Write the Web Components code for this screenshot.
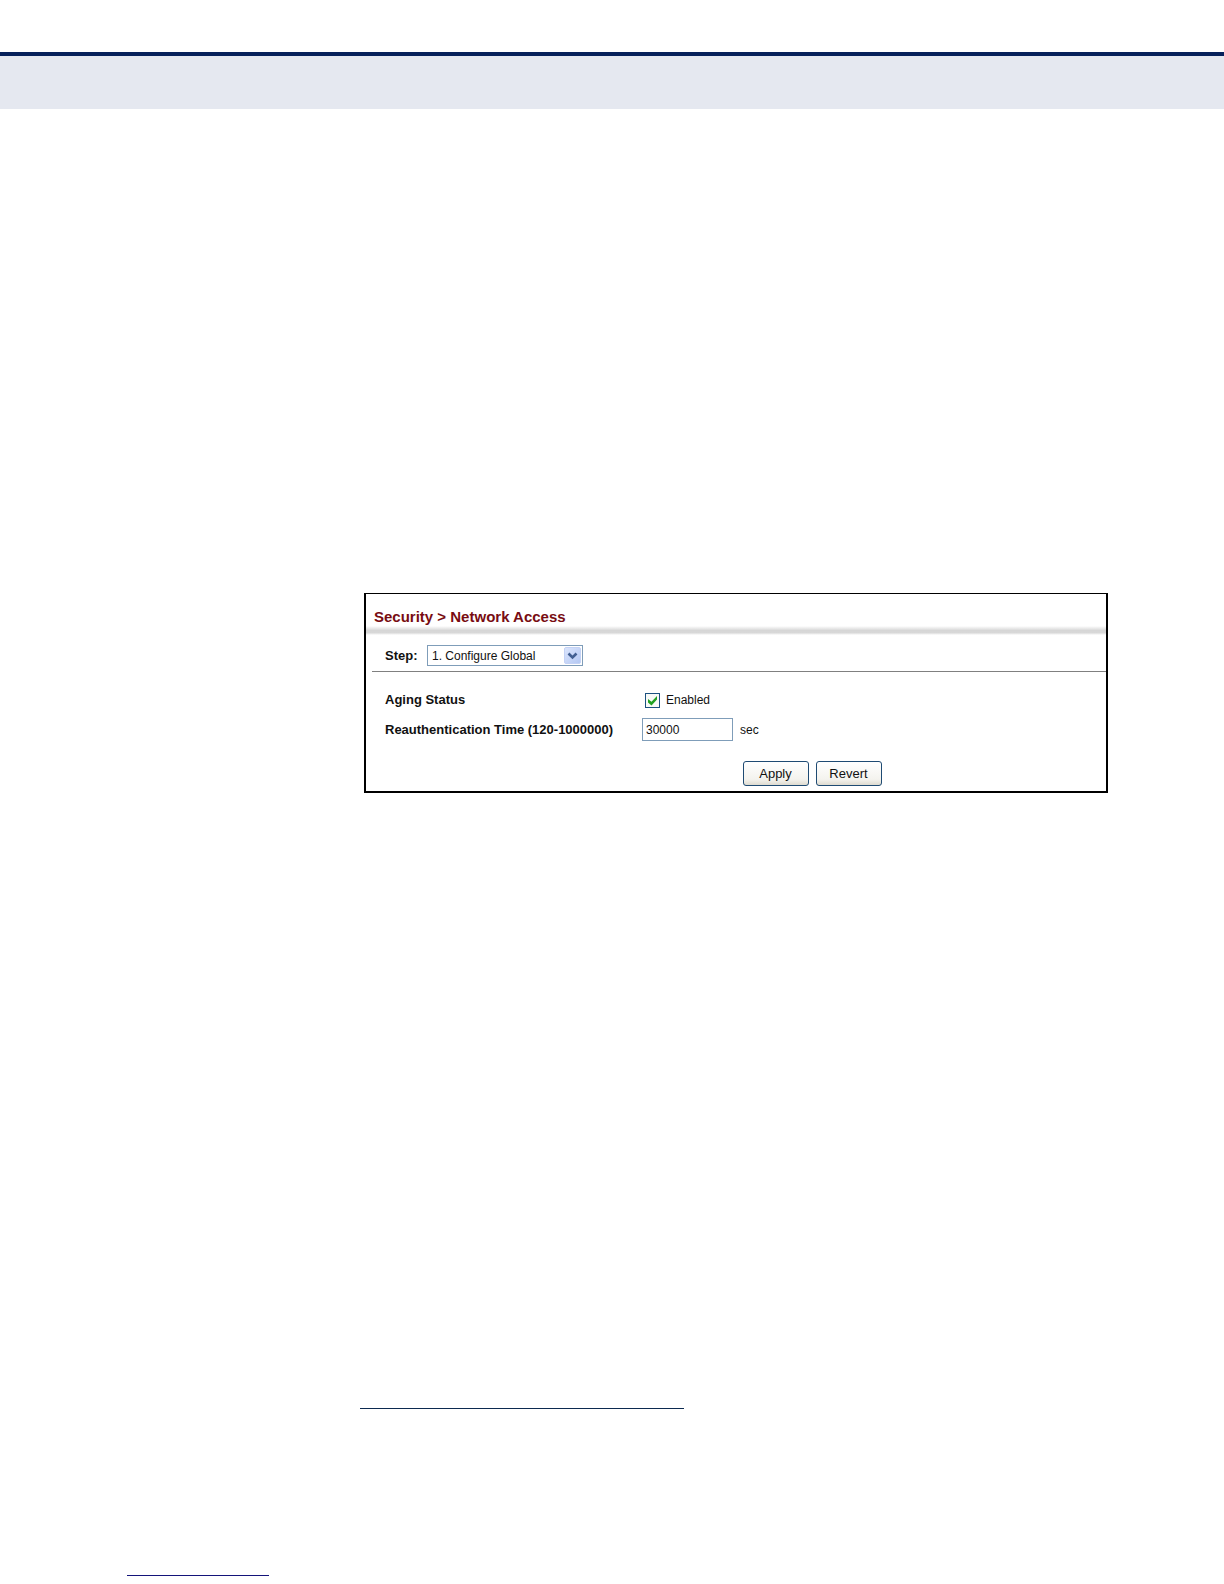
<!DOCTYPE html>
<html lang="en">
<head>
<meta charset="utf-8">
<meta name="viewport" content="width=device-width, initial-scale=1">
<title>Security &gt; Network Access</title>
<style>
  body {
    margin: 0;
    background: #fff;
    color: #111;
    font: 12px/16px "Liberation Sans", Arial, sans-serif;
  }
</style>
</head>
<body>
<manual-page>
  <page-banner slot="banner"></page-banner>
  <settings-panel heading="Security > Network Access">
    <step-select slot="toolbar" label="Step:">1. Configure Global</step-select>
    <check-setting label="Aging Status" text="Enabled"></check-setting>
    <text-setting label="Reauthentication Time (120-1000000)" value="30000" unit="sec"></text-setting>
    <push-button slot="actions">Apply</push-button>
    <push-button slot="actions">Revert</push-button>
  </settings-panel>
  <page-rule slot="note"></page-rule>
  <page-rule slot="footer"></page-rule>
</manual-page>

<script>
/**
 * Base class: renders styles and markup into an open shadow root.
 */
class BaseElement extends HTMLElement {
  constructor() {
    super();
    this.attachShadow({ mode: "open" });
  }

  /**
   * @returns {void}
   */
  connectedCallback() {
    const template = document.createElement("template");
    template.innerHTML = `<style>* { box-sizing: border-box; } ${this.styles}</style>${this.render()}`;
    this.shadowRoot.replaceChildren(template.content.cloneNode(true));
  }

  /**
   * @param {string} name
   * @returns {string}
   */
  attr(name) {
    return (this.getAttribute(name) || "")
      .replace(/&/g, "&amp;")
      .replace(/</g, "&lt;")
      .replace(/>/g, "&gt;")
      .replace(/"/g, "&quot;");
  }

  get styles() {
    return "";
  }

  render() {
    return "";
  }
}

class ManualPage extends BaseElement {
  get styles() {
    return `
      :host { display: flex; flex-direction: column; min-height: 100vh; box-sizing: border-box; padding-top: 52px; }
      main { margin: 484px 116px 0 364px; }
      .note { width: 324px; margin: 615px 0 0 360px; }
      footer { width: 142px; margin: 166px 0 8px 127px; }
      .note { --rule-color: #0c2a50; }
      footer { --rule-color: #14147a; }
    `;
  }

  render() {
    return `
      <slot name="banner"></slot>
      <main><slot></slot></main>
      <div class="note"><slot name="note"></slot></div>
      <footer><slot name="footer"></slot></footer>
    `;
  }
}

class PageBanner extends BaseElement {
  get styles() {
    return `
      :host { display: block; height: 57px; box-sizing: border-box; border-top: 4px solid #06215b; background: #e5e8f0; }
    `;
  }
}

class PageRule extends BaseElement {
  get styles() {
    return `
      :host { display: block; height: 1px; background: var(--rule-color); }
    `;
  }
}

class SettingsPanel extends BaseElement {
  get styles() {
    return `
      :host { display: block; box-sizing: border-box; border: 2px solid #000; border-top-width: 1px; }
      h1 { margin: 0; padding: 13px 8px 0; height: 32px; font-size: 15px; line-height: 20px; color: #780c12; }
      .shade { height: 9px; background: linear-gradient(#fff, #d6d6d6 50%, #d8d8d8 75%, #fff); }
      .toolbar { margin-left: 6px; padding: 10px 13px 5px; border-bottom: 1px solid #808080; }
      .rows { padding: 18px 19px 0; }
      .actions { display: flex; justify-content: center; gap: 7px; margin-top: 20px; padding: 0 0 5px 152px; }
    `;
  }

  render() {
    return `
      <h1>${this.attr("heading")}</h1>
      <div class="shade"></div>
      <div class="toolbar"><slot name="toolbar"></slot></div>
      <div class="rows"><slot></slot></div>
      <div class="actions"><slot name="actions"></slot></div>
    `;
  }
}

class StepSelect extends BaseElement {
  get styles() {
    return `
      :host { display: flex; align-items: center; }
      label { width: 42px; font-size: 13px; font-weight: bold; }
      .box { display: grid; width: 156px; }
      .box > * { grid-area: 1 / 1; }
      select { appearance: none; width: 100%; height: 21px; margin: 0; padding: 0 20px 0 4px; border: 1px solid #7f9db9; border-radius: 0; background: #fff; color: #111; font: inherit; }
      svg { justify-self: end; align-self: center; margin-right: 2px; pointer-events: none; }
    `;
  }

  render() {
    return `
      <label for="step">${this.attr("label")}</label>
      <span class="box">
        <select id="step"><option>${this.textContent}</option></select>
        <svg width="17" height="17" viewBox="0 0 17 17" aria-hidden="true">
          <defs><linearGradient id="face" x2="1" y2="1"><stop stop-color="#dce6fd"/><stop offset="1" stop-color="#b3c7f3"/></linearGradient></defs>
          <rect x=".5" y=".5" width="16" height="16" rx="1.5" fill="url(#face)" stroke="#c4d2f5"/>
          <path d="M4.500 6.500l4 4 4-4" fill="none" stroke="#425f92" stroke-width="2.600"/>
        </svg>
      </span>
    `;
  }
}

/** Shared layout for the label and control columns. */
const rowStyles = `
  :host { display: flex; align-items: center; }
  .name { width: 257px; flex: none; font-size: 13px; font-weight: bold; }
`;

class CheckSetting extends BaseElement {
  get styles() {
    return `
      ${rowStyles}
      :host { height: 20px; margin-bottom: 8px; }
      .box { display: grid; margin: 0 6px 0 3px; }
      .box > * { grid-area: 1 / 1; }
      input { appearance: none; width: 15px; height: 15px; margin: 0; border: 1px solid #1c5180; background: #f8faf7; }
      svg { pointer-events: none; }
      input:not(:checked) + svg { visibility: hidden; }
    `;
  }

  render() {
    return `
      <label class="name" for="flag">${this.attr("label")}</label>
      <span class="box">
        <input id="flag" type="checkbox" checked>
        <svg width="15" height="15" viewBox="0 0 15 15" aria-hidden="true">
          <path d="M3 6v3.500l3.500 3 5.500-6v-3.500L6.500 8.700z" fill="#21a121"/>
        </svg>
      </span>
      <label for="flag">${this.attr("text")}</label>
    `;
  }
}

class TextSetting extends BaseElement {
  get styles() {
    return `
      ${rowStyles}
      input { width: 91px; height: 23px; margin: 0 7px 0 0; padding: 0 3px; border: 1px solid #7f9db9; border-radius: 0; background: #fff; color: #111; font: inherit; }
    `;
  }

  render() {
    return `
      <label class="name" for="field">${this.attr("label")}</label>
      <input id="field" type="text" value="${this.attr("value")}">
      <span>${this.attr("unit")}</span>
    `;
  }
}

class PushButton extends BaseElement {
  get styles() {
    return `
      :host { display: block; }
      button { display: block; min-width: 66px; height: 25px; margin: 0; padding: 0 12px; border: 1px solid #1f4b73; border-radius: 3px; background: linear-gradient(#fff, #f4f3ee 75%, #dedbd0); color: #111; font: 13px/16px "Liberation Sans", Arial, sans-serif; }
    `;
  }

  render() {
    return `<button type="button"><slot></slot></button>`;
  }
}

customElements.define("manual-page", ManualPage);
customElements.define("page-banner", PageBanner);
customElements.define("page-rule", PageRule);
customElements.define("settings-panel", SettingsPanel);
customElements.define("step-select", StepSelect);
customElements.define("check-setting", CheckSetting);
customElements.define("text-setting", TextSetting);
customElements.define("push-button", PushButton);
</script>
</body>
</html>
